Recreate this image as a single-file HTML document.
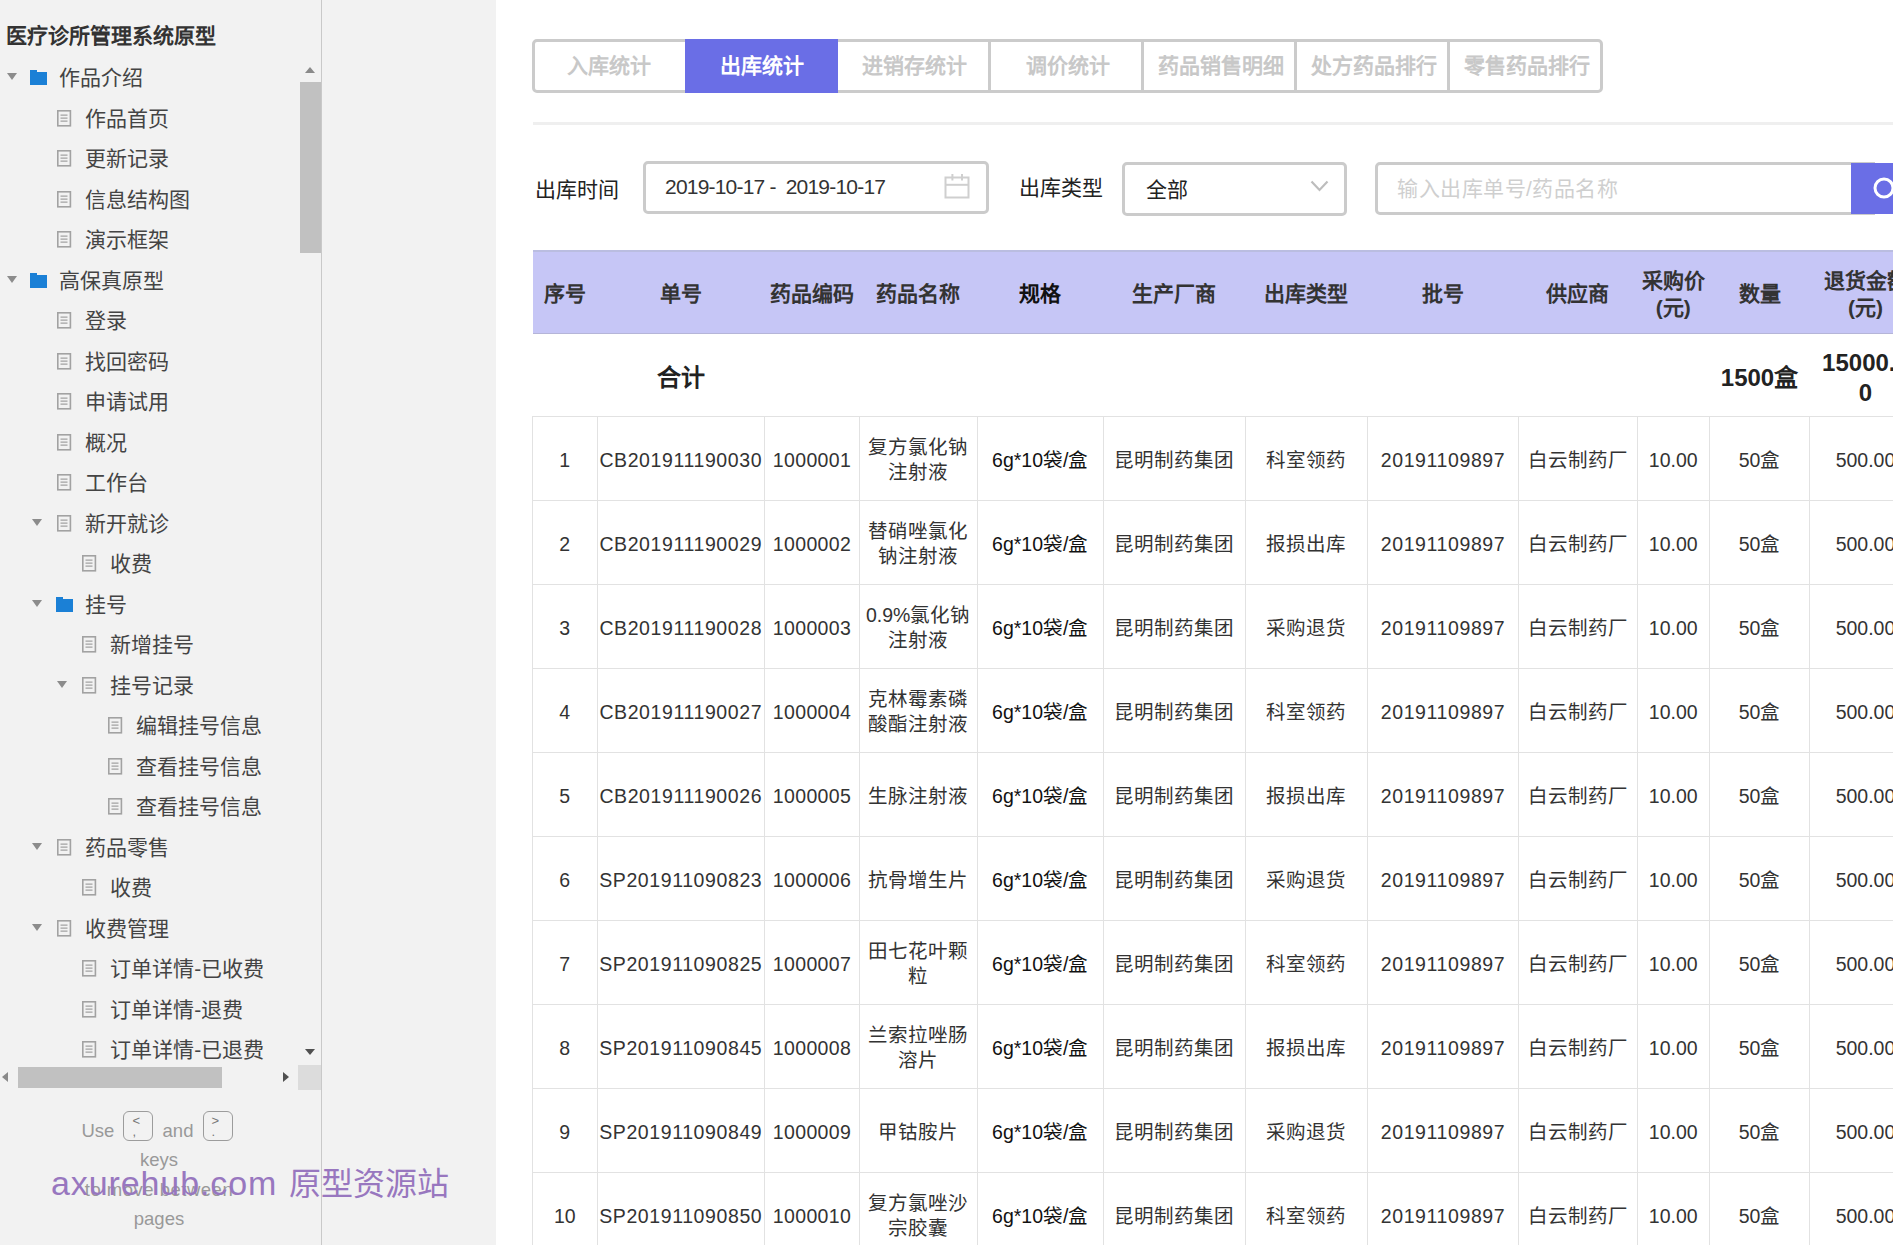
<!DOCTYPE html>
<html lang="zh-CN"><head><meta charset="utf-8"><style>
*{margin:0;padding:0;box-sizing:border-box}
html,body{width:1893px;height:1245px;overflow:hidden;background:#fff;font-family:"Liberation Sans", sans-serif}
.abs{position:absolute}
#side{position:absolute;left:0;top:0;width:322px;height:1245px;background:#f2f2f2}
#gap{position:absolute;left:322px;top:0;width:174px;height:1245px;background:#f2f2f2}
#sideborder{position:absolute;left:321px;top:0;width:1px;height:1245px;background:#c9c9c9;z-index:5}
.title{position:absolute;left:5.5px;top:21.5px;font-size:21px;font-weight:bold;color:#333;line-height:28px;white-space:nowrap}
.it{position:absolute;font-size:21px;color:#444;line-height:28px;white-space:nowrap}
.tri{position:absolute;width:0;height:0;border-left:5px solid transparent;border-right:5px solid transparent;border-top:7px solid #8c8c8c}
.fold{position:absolute;width:17px;height:13px;background:#1b80d6}
.fold:before{content:"";position:absolute;left:0;top:-2px;width:7px;height:2px;background:#1b80d6}
.pg{position:absolute;width:14px;height:16px;border:1px solid #9a9a9a}
.pg i{position:absolute;left:2px;width:8px;height:1px;background:#9a9a9a}
.main{position:absolute;left:496px;top:0;width:1397px;height:1245px;background:#fff}

.tabs{position:absolute;left:532px;top:39px;width:1071px;height:54px;border:3px solid #cbcbcb;border-radius:5px;background:#fff}
.tab{position:absolute;top:-3px;height:54px;line-height:54px;text-align:center;font-size:21px;font-weight:bold;color:#c8c8c8;white-space:nowrap}
.tabsep{position:absolute;top:-3px;width:3px;height:54px;background:#cbcbcb}
.tab.on{background:#6a6ee6;color:#fff}
.hr{position:absolute;left:533px;top:122px;width:1360px;height:3px;background:#efefef}
.lbl{position:absolute;font-size:21px;color:#222;line-height:28px;white-space:nowrap}
.box{position:absolute;border:3px solid #cbcbcb;border-radius:5px;background:#fff}
.ph{position:absolute;font-size:21px;line-height:28px;white-space:nowrap}
table{position:absolute;left:532px;top:250px;border-collapse:collapse;table-layout:fixed}
td{text-align:center;vertical-align:middle;font-size:19.5px;color:#333;line-height:26px;padding:0;border:1px solid #e2e2e2;overflow:hidden;white-space:nowrap}
tr.h td{background:#c6c6f6;font-weight:bold;font-size:21px;color:#333;line-height:27px;height:82px;border:none;border-top:2px solid #babde0;border-bottom:1px solid #b5b5d8;white-space:normal;padding-top:3px}
tr.t td{height:83px;border-left:none;border-right:none;border-top:none;font-weight:bold;font-size:24px;color:#222;line-height:30px;white-space:normal;padding-top:7px}
tr.d td{height:84px;white-space:normal;padding-top:4px;line-height:25px}
td.c2{letter-spacing:0.6px}
td.c3{letter-spacing:0.4px}
td.c8{letter-spacing:0.6px}
td.c5{color:#111}
td.hk{color:#111!important}

.sb{position:absolute;background:#c1c1c1}
.keys{position:absolute;left:0;width:318px;text-align:center;font-size:18.5px;color:#999;line-height:30px;white-space:nowrap}
.kb{display:inline-block;vertical-align:middle;width:30px;height:30px;border:1.5px solid #9c9c9c;border-radius:6px;font-size:13px;line-height:11px;text-align:left;padding:3px 0 0 8px;color:#777;margin:0 4px;position:relative;top:-6px}
.wm{position:absolute;left:51px;top:1161px;font-size:34px;color:#9877bf;line-height:44px;white-space:nowrap;z-index:4}
</style></head>
<body>
<div id="side">
<div class="title">医疗诊所管理系统原型</div>
<div class="tri" style="left:7px;top:73.0px"></div>
<div class="fold" style="left:30.0px;top:72.0px"></div>
<div class="it" style="left:59.0px;top:64.0px">作品介绍</div>
<svg class="abs" style="left:56.6px;top:109.5px" width="15" height="17" viewBox="0 0 15 17"><rect x="0.8" y="0.8" width="12.6" height="15" fill="none" stroke="#a2a2a2" stroke-width="1.6"/><path d="M3.5 5.2H10.5M3.5 8.2H10.5M3.5 11.2H10.5" stroke="#a2a2a2" stroke-width="1.3"/></svg>
<div class="it" style="left:84.6px;top:104.5px">作品首页</div>
<svg class="abs" style="left:56.6px;top:150.0px" width="15" height="17" viewBox="0 0 15 17"><rect x="0.8" y="0.8" width="12.6" height="15" fill="none" stroke="#a2a2a2" stroke-width="1.6"/><path d="M3.5 5.2H10.5M3.5 8.2H10.5M3.5 11.2H10.5" stroke="#a2a2a2" stroke-width="1.3"/></svg>
<div class="it" style="left:84.6px;top:145.0px">更新记录</div>
<svg class="abs" style="left:56.6px;top:190.5px" width="15" height="17" viewBox="0 0 15 17"><rect x="0.8" y="0.8" width="12.6" height="15" fill="none" stroke="#a2a2a2" stroke-width="1.6"/><path d="M3.5 5.2H10.5M3.5 8.2H10.5M3.5 11.2H10.5" stroke="#a2a2a2" stroke-width="1.3"/></svg>
<div class="it" style="left:84.6px;top:185.5px">信息结构图</div>
<svg class="abs" style="left:56.6px;top:231.0px" width="15" height="17" viewBox="0 0 15 17"><rect x="0.8" y="0.8" width="12.6" height="15" fill="none" stroke="#a2a2a2" stroke-width="1.6"/><path d="M3.5 5.2H10.5M3.5 8.2H10.5M3.5 11.2H10.5" stroke="#a2a2a2" stroke-width="1.3"/></svg>
<div class="it" style="left:84.6px;top:226.0px">演示框架</div>
<div class="tri" style="left:7px;top:275.5px"></div>
<div class="fold" style="left:30.0px;top:274.5px"></div>
<div class="it" style="left:59.0px;top:266.5px">高保真原型</div>
<svg class="abs" style="left:56.6px;top:312.0px" width="15" height="17" viewBox="0 0 15 17"><rect x="0.8" y="0.8" width="12.6" height="15" fill="none" stroke="#a2a2a2" stroke-width="1.6"/><path d="M3.5 5.2H10.5M3.5 8.2H10.5M3.5 11.2H10.5" stroke="#a2a2a2" stroke-width="1.3"/></svg>
<div class="it" style="left:84.6px;top:307.0px">登录</div>
<svg class="abs" style="left:56.6px;top:352.5px" width="15" height="17" viewBox="0 0 15 17"><rect x="0.8" y="0.8" width="12.6" height="15" fill="none" stroke="#a2a2a2" stroke-width="1.6"/><path d="M3.5 5.2H10.5M3.5 8.2H10.5M3.5 11.2H10.5" stroke="#a2a2a2" stroke-width="1.3"/></svg>
<div class="it" style="left:84.6px;top:347.5px">找回密码</div>
<svg class="abs" style="left:56.6px;top:393.0px" width="15" height="17" viewBox="0 0 15 17"><rect x="0.8" y="0.8" width="12.6" height="15" fill="none" stroke="#a2a2a2" stroke-width="1.6"/><path d="M3.5 5.2H10.5M3.5 8.2H10.5M3.5 11.2H10.5" stroke="#a2a2a2" stroke-width="1.3"/></svg>
<div class="it" style="left:84.6px;top:388.0px">申请试用</div>
<svg class="abs" style="left:56.6px;top:433.5px" width="15" height="17" viewBox="0 0 15 17"><rect x="0.8" y="0.8" width="12.6" height="15" fill="none" stroke="#a2a2a2" stroke-width="1.6"/><path d="M3.5 5.2H10.5M3.5 8.2H10.5M3.5 11.2H10.5" stroke="#a2a2a2" stroke-width="1.3"/></svg>
<div class="it" style="left:84.6px;top:428.5px">概况</div>
<svg class="abs" style="left:56.6px;top:474.0px" width="15" height="17" viewBox="0 0 15 17"><rect x="0.8" y="0.8" width="12.6" height="15" fill="none" stroke="#a2a2a2" stroke-width="1.6"/><path d="M3.5 5.2H10.5M3.5 8.2H10.5M3.5 11.2H10.5" stroke="#a2a2a2" stroke-width="1.3"/></svg>
<div class="it" style="left:84.6px;top:469.0px">工作台</div>
<div class="tri" style="left:32px;top:518.5px"></div>
<svg class="abs" style="left:56.6px;top:514.5px" width="15" height="17" viewBox="0 0 15 17"><rect x="0.8" y="0.8" width="12.6" height="15" fill="none" stroke="#a2a2a2" stroke-width="1.6"/><path d="M3.5 5.2H10.5M3.5 8.2H10.5M3.5 11.2H10.5" stroke="#a2a2a2" stroke-width="1.3"/></svg>
<div class="it" style="left:84.6px;top:509.5px">新开就诊</div>
<svg class="abs" style="left:82.2px;top:555.0px" width="15" height="17" viewBox="0 0 15 17"><rect x="0.8" y="0.8" width="12.6" height="15" fill="none" stroke="#a2a2a2" stroke-width="1.6"/><path d="M3.5 5.2H10.5M3.5 8.2H10.5M3.5 11.2H10.5" stroke="#a2a2a2" stroke-width="1.3"/></svg>
<div class="it" style="left:110.2px;top:550.0px">收费</div>
<div class="tri" style="left:32px;top:599.5px"></div>
<div class="fold" style="left:55.6px;top:598.5px"></div>
<div class="it" style="left:84.6px;top:590.5px">挂号</div>
<svg class="abs" style="left:82.2px;top:636.0px" width="15" height="17" viewBox="0 0 15 17"><rect x="0.8" y="0.8" width="12.6" height="15" fill="none" stroke="#a2a2a2" stroke-width="1.6"/><path d="M3.5 5.2H10.5M3.5 8.2H10.5M3.5 11.2H10.5" stroke="#a2a2a2" stroke-width="1.3"/></svg>
<div class="it" style="left:110.2px;top:631.0px">新增挂号</div>
<div class="tri" style="left:57px;top:680.5px"></div>
<svg class="abs" style="left:82.2px;top:676.5px" width="15" height="17" viewBox="0 0 15 17"><rect x="0.8" y="0.8" width="12.6" height="15" fill="none" stroke="#a2a2a2" stroke-width="1.6"/><path d="M3.5 5.2H10.5M3.5 8.2H10.5M3.5 11.2H10.5" stroke="#a2a2a2" stroke-width="1.3"/></svg>
<div class="it" style="left:110.2px;top:671.5px">挂号记录</div>
<svg class="abs" style="left:107.8px;top:717.0px" width="15" height="17" viewBox="0 0 15 17"><rect x="0.8" y="0.8" width="12.6" height="15" fill="none" stroke="#a2a2a2" stroke-width="1.6"/><path d="M3.5 5.2H10.5M3.5 8.2H10.5M3.5 11.2H10.5" stroke="#a2a2a2" stroke-width="1.3"/></svg>
<div class="it" style="left:135.8px;top:712.0px">编辑挂号信息</div>
<svg class="abs" style="left:107.8px;top:757.5px" width="15" height="17" viewBox="0 0 15 17"><rect x="0.8" y="0.8" width="12.6" height="15" fill="none" stroke="#a2a2a2" stroke-width="1.6"/><path d="M3.5 5.2H10.5M3.5 8.2H10.5M3.5 11.2H10.5" stroke="#a2a2a2" stroke-width="1.3"/></svg>
<div class="it" style="left:135.8px;top:752.5px">查看挂号信息</div>
<svg class="abs" style="left:107.8px;top:798.0px" width="15" height="17" viewBox="0 0 15 17"><rect x="0.8" y="0.8" width="12.6" height="15" fill="none" stroke="#a2a2a2" stroke-width="1.6"/><path d="M3.5 5.2H10.5M3.5 8.2H10.5M3.5 11.2H10.5" stroke="#a2a2a2" stroke-width="1.3"/></svg>
<div class="it" style="left:135.8px;top:793.0px">查看挂号信息</div>
<div class="tri" style="left:32px;top:842.5px"></div>
<svg class="abs" style="left:56.6px;top:838.5px" width="15" height="17" viewBox="0 0 15 17"><rect x="0.8" y="0.8" width="12.6" height="15" fill="none" stroke="#a2a2a2" stroke-width="1.6"/><path d="M3.5 5.2H10.5M3.5 8.2H10.5M3.5 11.2H10.5" stroke="#a2a2a2" stroke-width="1.3"/></svg>
<div class="it" style="left:84.6px;top:833.5px">药品零售</div>
<svg class="abs" style="left:82.2px;top:879.0px" width="15" height="17" viewBox="0 0 15 17"><rect x="0.8" y="0.8" width="12.6" height="15" fill="none" stroke="#a2a2a2" stroke-width="1.6"/><path d="M3.5 5.2H10.5M3.5 8.2H10.5M3.5 11.2H10.5" stroke="#a2a2a2" stroke-width="1.3"/></svg>
<div class="it" style="left:110.2px;top:874.0px">收费</div>
<div class="tri" style="left:32px;top:923.5px"></div>
<svg class="abs" style="left:56.6px;top:919.5px" width="15" height="17" viewBox="0 0 15 17"><rect x="0.8" y="0.8" width="12.6" height="15" fill="none" stroke="#a2a2a2" stroke-width="1.6"/><path d="M3.5 5.2H10.5M3.5 8.2H10.5M3.5 11.2H10.5" stroke="#a2a2a2" stroke-width="1.3"/></svg>
<div class="it" style="left:84.6px;top:914.5px">收费管理</div>
<svg class="abs" style="left:82.2px;top:960.0px" width="15" height="17" viewBox="0 0 15 17"><rect x="0.8" y="0.8" width="12.6" height="15" fill="none" stroke="#a2a2a2" stroke-width="1.6"/><path d="M3.5 5.2H10.5M3.5 8.2H10.5M3.5 11.2H10.5" stroke="#a2a2a2" stroke-width="1.3"/></svg>
<div class="it" style="left:110.2px;top:955.0px">订单详情-已收费</div>
<svg class="abs" style="left:82.2px;top:1000.5px" width="15" height="17" viewBox="0 0 15 17"><rect x="0.8" y="0.8" width="12.6" height="15" fill="none" stroke="#a2a2a2" stroke-width="1.6"/><path d="M3.5 5.2H10.5M3.5 8.2H10.5M3.5 11.2H10.5" stroke="#a2a2a2" stroke-width="1.3"/></svg>
<div class="it" style="left:110.2px;top:995.5px">订单详情-退费</div>
<svg class="abs" style="left:82.2px;top:1041.0px" width="15" height="17" viewBox="0 0 15 17"><rect x="0.8" y="0.8" width="12.6" height="15" fill="none" stroke="#a2a2a2" stroke-width="1.6"/><path d="M3.5 5.2H10.5M3.5 8.2H10.5M3.5 11.2H10.5" stroke="#a2a2a2" stroke-width="1.3"/></svg>
<div class="it" style="left:110.2px;top:1036.0px">订单详情-已退费</div>
<div class="sb" style="left:300px;top:82px;width:21px;height:171px"></div>
<div class="abs" style="left:305px;top:67px;width:0;height:0;border-left:5.5px solid transparent;border-right:5.5px solid transparent;border-bottom:6px solid #8a8a8a"></div>
<div class="abs" style="left:305px;top:1049px;width:0;height:0;border-left:5.5px solid transparent;border-right:5.5px solid transparent;border-top:6px solid #505050"></div>
<div class="sb" style="left:18px;top:1067px;width:204px;height:21px"></div>
<div class="abs" style="left:2px;top:1072px;width:0;height:0;border-top:5.5px solid transparent;border-bottom:5.5px solid transparent;border-right:6px solid #8a8a8a"></div>
<div class="abs" style="left:283px;top:1072px;width:0;height:0;border-top:5.5px solid transparent;border-bottom:5.5px solid transparent;border-left:6px solid #505050"></div>
<div class="abs" style="left:298px;top:1065px;width:23px;height:25px;background:#dcdcdc"></div>
<div class="keys" style="top:1116px">Use <span class="kb">&lt;<br>,</span> and <span class="kb">&gt;<br>.</span></div>
<div class="keys" style="top:1145px">keys</div>
<div class="keys" style="top:1175px;letter-spacing:0.5px">to move between</div>
<div class="keys" style="top:1204px">pages</div>
<div class="wm"><span style="letter-spacing:0.9px">axurehub.com</span></div><div class="wm" style="left:289px;top:1162px;font-size:32px">原型资源站</div>
</div>
<div id="gap"></div>
<div id="sideborder"></div>
<div class="main"></div>
<div class="tabs">
<div class="tab" style="left:-3.0px;width:153.0px">入库统计</div>
<div class="tab on" style="left:150.0px;width:153.0px">出库统计</div>
<div class="tab" style="left:303.0px;width:153.0px">进销存统计</div>
<div class="tab" style="left:456.0px;width:153.0px">调价统计</div>
<div class="tabsep" style="left:452.5px"></div>
<div class="tab" style="left:609.0px;width:153.0px">药品销售明细</div>
<div class="tabsep" style="left:605.5px"></div>
<div class="tab" style="left:762.0px;width:153.0px">处方药品排行</div>
<div class="tabsep" style="left:758.5px"></div>
<div class="tab" style="left:915.0px;width:153.0px">零售药品排行</div>
<div class="tabsep" style="left:911.5px"></div>
</div>
<div class="hr"></div>
<div class="lbl" style="left:535px;top:176px">出库时间</div>
<div class="box" style="left:643px;top:161px;width:346px;height:53px"></div>
<div class="ph" style="left:665px;top:173px;color:#333;letter-spacing:-0.8px">2019-10-17 -&nbsp; 2019-10-17</div>
<svg class="abs" style="left:944px;top:173px" width="26" height="26" viewBox="0 0 26 26"><rect x="1.5" y="4.5" width="23" height="20" fill="none" stroke="#cfcfcf" stroke-width="2"/><line x1="1.5" y1="11.8" x2="24.5" y2="11.8" stroke="#cfcfcf" stroke-width="2"/><line x1="8.4" y1="1" x2="8.4" y2="7.5" stroke="#cfcfcf" stroke-width="2"/><line x1="18" y1="1" x2="18" y2="7.5" stroke="#cfcfcf" stroke-width="2"/></svg>
<div class="lbl" style="left:1019px;top:174px">出库类型</div>
<div class="box" style="left:1122px;top:162px;width:225px;height:54px"></div>
<div class="ph" style="left:1146px;top:176px;color:#222">全部</div>
<svg class="abs" style="left:1310px;top:180px" width="19" height="13" viewBox="0 0 19 13"><polyline points="1.5,1.5 9.5,10 17.5,1.5" fill="none" stroke="#bdbdbd" stroke-width="2.2"/></svg>
<div class="box" style="left:1375px;top:162px;width:500px;height:53px;border-radius:5px 0 0 5px"></div>
<div class="ph" style="left:1397px;top:175px;color:#cfcfcf;letter-spacing:0.5px">输入出库单号/药品名称</div>
<div class="abs" style="left:1851px;top:163px;width:42px;height:51px;background:#6a6ee6"></div>
<svg class="abs" style="left:1860px;top:170px" width="33" height="36" viewBox="0 0 33 36"><circle cx="24" cy="18" r="9" fill="none" stroke="#fff" stroke-width="3"/></svg>
<table style="width:1389.0px">
<colgroup><col style="width:64.5px"><col style="width:167.5px"><col style="width:95px"><col style="width:117.5px"><col style="width:126.5px"><col style="width:141.5px"><col style="width:122.5px"><col style="width:151px"><col style="width:118.5px"><col style="width:72.5px"><col style="width:100px"><col style="width:112px"></colgroup>
<tr class="h"><td>序号</td><td>单号</td><td>药品编码</td><td>药品名称</td><td class="hk">规格</td><td>生产厂商</td><td>出库类型</td><td>批号</td><td>供应商</td><td>采购价<br>(元)</td><td>数量</td><td>退货金额<br>(元)</td></tr>
<tr class="t"><td></td><td>合计</td><td></td><td></td><td></td><td></td><td></td><td></td><td></td><td></td><td>1500盒</td><td>15000.0<br>0</td></tr>
<tr class="d"><td class="c1">1</td><td class="c2">CB201911190030</td><td class="c3">1000001</td><td class="c4">复方氯化钠<br>注射液</td><td class="c5">6g*10袋/盒</td><td class="c6">昆明制药集团</td><td class="c7">科室领药</td><td class="c8">20191109897</td><td class="c9">白云制药厂</td><td class="c10">10.00</td><td class="c11">50盒</td><td class="c12">500.00</td></tr>
<tr class="d"><td class="c1">2</td><td class="c2">CB201911190029</td><td class="c3">1000002</td><td class="c4">替硝唑氯化<br>钠注射液</td><td class="c5">6g*10袋/盒</td><td class="c6">昆明制药集团</td><td class="c7">报损出库</td><td class="c8">20191109897</td><td class="c9">白云制药厂</td><td class="c10">10.00</td><td class="c11">50盒</td><td class="c12">500.00</td></tr>
<tr class="d"><td class="c1">3</td><td class="c2">CB201911190028</td><td class="c3">1000003</td><td class="c4">0.9%氯化钠<br>注射液</td><td class="c5">6g*10袋/盒</td><td class="c6">昆明制药集团</td><td class="c7">采购退货</td><td class="c8">20191109897</td><td class="c9">白云制药厂</td><td class="c10">10.00</td><td class="c11">50盒</td><td class="c12">500.00</td></tr>
<tr class="d"><td class="c1">4</td><td class="c2">CB201911190027</td><td class="c3">1000004</td><td class="c4">克林霉素磷<br>酸酯注射液</td><td class="c5">6g*10袋/盒</td><td class="c6">昆明制药集团</td><td class="c7">科室领药</td><td class="c8">20191109897</td><td class="c9">白云制药厂</td><td class="c10">10.00</td><td class="c11">50盒</td><td class="c12">500.00</td></tr>
<tr class="d"><td class="c1">5</td><td class="c2">CB201911190026</td><td class="c3">1000005</td><td class="c4">生脉注射液</td><td class="c5">6g*10袋/盒</td><td class="c6">昆明制药集团</td><td class="c7">报损出库</td><td class="c8">20191109897</td><td class="c9">白云制药厂</td><td class="c10">10.00</td><td class="c11">50盒</td><td class="c12">500.00</td></tr>
<tr class="d"><td class="c1">6</td><td class="c2">SP201911090823</td><td class="c3">1000006</td><td class="c4">抗骨增生片</td><td class="c5">6g*10袋/盒</td><td class="c6">昆明制药集团</td><td class="c7">采购退货</td><td class="c8">20191109897</td><td class="c9">白云制药厂</td><td class="c10">10.00</td><td class="c11">50盒</td><td class="c12">500.00</td></tr>
<tr class="d"><td class="c1">7</td><td class="c2">SP201911090825</td><td class="c3">1000007</td><td class="c4">田七花叶颗<br>粒</td><td class="c5">6g*10袋/盒</td><td class="c6">昆明制药集团</td><td class="c7">科室领药</td><td class="c8">20191109897</td><td class="c9">白云制药厂</td><td class="c10">10.00</td><td class="c11">50盒</td><td class="c12">500.00</td></tr>
<tr class="d"><td class="c1">8</td><td class="c2">SP201911090845</td><td class="c3">1000008</td><td class="c4">兰索拉唑肠<br>溶片</td><td class="c5">6g*10袋/盒</td><td class="c6">昆明制药集团</td><td class="c7">报损出库</td><td class="c8">20191109897</td><td class="c9">白云制药厂</td><td class="c10">10.00</td><td class="c11">50盒</td><td class="c12">500.00</td></tr>
<tr class="d"><td class="c1">9</td><td class="c2">SP201911090849</td><td class="c3">1000009</td><td class="c4">甲钴胺片</td><td class="c5">6g*10袋/盒</td><td class="c6">昆明制药集团</td><td class="c7">采购退货</td><td class="c8">20191109897</td><td class="c9">白云制药厂</td><td class="c10">10.00</td><td class="c11">50盒</td><td class="c12">500.00</td></tr>
<tr class="d"><td class="c1">10</td><td class="c2">SP201911090850</td><td class="c3">1000010</td><td class="c4">复方氯唑沙<br>宗胶囊</td><td class="c5">6g*10袋/盒</td><td class="c6">昆明制药集团</td><td class="c7">科室领药</td><td class="c8">20191109897</td><td class="c9">白云制药厂</td><td class="c10">10.00</td><td class="c11">50盒</td><td class="c12">500.00</td></tr>
</table>
</body></html>
